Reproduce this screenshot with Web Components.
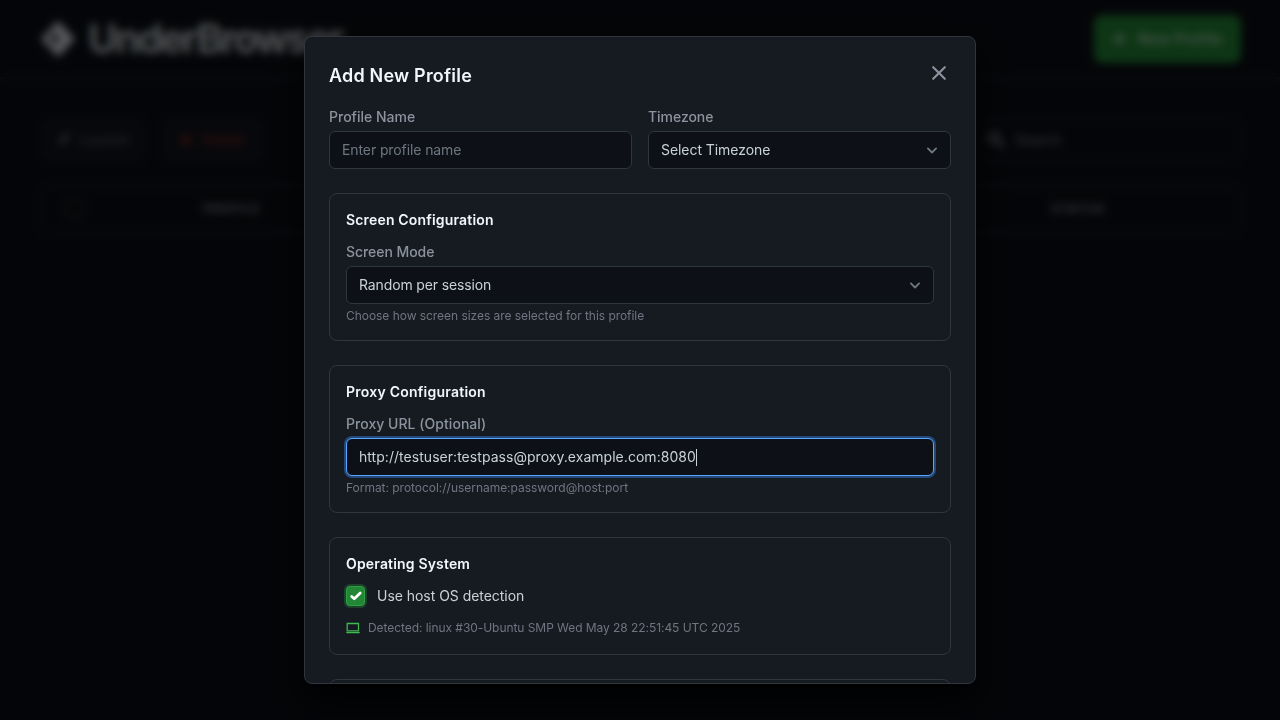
<!DOCTYPE html>
<html lang="en">
<head>
<meta charset="utf-8">
<title>UnderBrowser</title>
<style>
html, body { margin: 0; height: 100%; background: #0a0e14; overflow: hidden; }
body { font-family: Inter, "Liberation Sans", sans-serif; font-size: 14px; line-height: 20px; color: #c9d1d9; }
</style>
</head>
<body>
<app-shell></app-shell>
<profile-dialog heading="Add New Profile">
  <field-row>
    <form-field label="Profile Name"><text-box placeholder="Enter profile name" style="letter-spacing:-.1px"></text-box></form-field>
    <form-field label="Timezone" style="--label-track:-.05px"><select-box style="letter-spacing:-.06px">Select Timezone</select-box></form-field>
  </field-row>
  <config-section heading="Screen Configuration">
    <form-field label="Screen Mode" style="--label-track:-.06px;--hint-track:-.045px" hint="Choose how screen sizes are selected for this profile"><select-box style="letter-spacing:-.13px">Random per session</select-box></form-field>
  </config-section>
  <config-section heading="Proxy Configuration" style="--head-track:.24px">
    <form-field label="Proxy URL (Optional)" style="--label-track:.04px;--hint-track:-.03px" hint="Format: protocol://username:password@host:port"><text-box focused style="letter-spacing:.04px">http://testuser:testpass@proxy.example.com:8080</text-box></form-field>
  </config-section>
  <config-section heading="Operating System">
    <check-option>Use host OS detection</check-option>
    <os-info>Detected: linux #30-Ubuntu SMP Wed May 28 22:51:45 UTC 2025</os-info>
  </config-section>
  <config-section heading=""></config-section>
</profile-dialog>
<script>
const define = (name, render) => customElements.define(name, class extends HTMLElement {
  constructor() { super(); this.attachShadow({ mode: 'open' }); }
  connectedCallback() {
    const a = n => this.getAttribute(n) || '';
    this.shadowRoot.innerHTML = render(a);
  }
});

define('app-shell', () => `
<style>
:host { display: block; height: 720px; box-sizing: border-box; }
header { height: 79px; box-sizing: border-box; padding: 0 39px 0 40px; border-bottom: 1px solid #30363d; display: flex; align-items: center; justify-content: space-between; }
.brand { display: flex; align-items: center; gap: 12px; font-size: 40px; line-height: 48px; font-weight: 600; color: #f0f6fc; letter-spacing: -2.1px; opacity: .9; }
.brand svg { display: block; }
.new { display: flex; align-items: center; gap: 11px; height: 48px; width: 147px; box-sizing: border-box; padding: 0 18px; border-radius: 8px; background: #238636; color: rgba(255,255,255,.7); font-weight: 600; font-size: 14px; letter-spacing: .65px; white-space: nowrap; }
main { padding: 38px 39px 0 40px; }
.bar { display: flex; gap: 16px; height: 46px; align-items: center; }
.btn { display: flex; align-items: center; gap: 8px; height: 46px; box-sizing: border-box; padding: 0 16px; border-radius: 8px; background: #161b22; color: #8b949e; width: 106px; font-weight: 500; opacity: .6; }
.btn.del { color: #da3633; width: 102px; }
.search { margin-left: auto; width: 266px; height: 42px; box-sizing: border-box; border: 1px solid #30363d; border-radius: 8px; display: flex; align-items: center; gap: 10px; padding: 0 11px; color: #7d8590; }
.table { margin-top: 22px; height: 48px; box-sizing: border-box; border: 1px solid #30363d; border-radius: 8px; display: grid; grid-template-columns: 162px 848px 1fr; align-items: center; font-size: 12px; font-weight: 600; letter-spacing: 1.2px; color: #8b949e; }
.box { width: 18px; height: 18px; box-sizing: border-box; border: 1px solid #484f58; border-radius: 4px; margin-left: 24px; }
</style>
<header>
  <div class="brand"><svg width="36" height="38" viewBox="0 0 36 38"><path fill="#f0f6fc" fill-rule="evenodd" d="M18 1 35 19 18 37 1 19ZM12 12v13l8-6.5Z"/></svg><span>UnderBrowser</span></div>
  <div class="new"><svg width="16" height="16" viewBox="0 0 16 16"><path d="M8 2v12M2 8h12" stroke="currentColor" stroke-width="3"/></svg>New Profile</div>
</header>
<main>
  <div class="bar">
    <div class="btn"><svg width="16" height="16" viewBox="0 0 16 16"><path fill="currentColor" d="M3 15 5 9H2L10 1h4l-3 5h3Z"/></svg>Launch</div>
    <div class="btn del"><svg width="16" height="16" viewBox="0 0 16 16"><path d="m3 3 10 10M13 3 3 13" stroke="currentColor" stroke-width="3"/></svg>Delete</div>
    <div class="search"><svg width="18" height="18" viewBox="0 0 18 18" fill="none" stroke="currentColor" stroke-width="3"><circle cx="7" cy="7" r="5"/><path d="m11 11 6 6"/></svg>Search</div>
  </div>
  <div class="table"><span class="box"></span><span>PROFILE</span><span>STATUS</span></div>
</main>`);

define('profile-dialog', a => `
<style>
:host { position: fixed; inset: 0; display: flex; align-items: center; justify-content: center; background: rgba(0,0,0,.6); -webkit-backdrop-filter: blur(4px); backdrop-filter: blur(4px); }
.panel { width: 672px; height: 648px; box-sizing: border-box; border: 1px solid #30363d; border-radius: 8px; background: #161b22; padding: 24px; overflow: hidden; box-shadow: 0 16px 32px rgba(0,0,0,.85); }
header { display: flex; justify-content: space-between; align-items: flex-start; height: 46px; }
h2 { margin: 0; padding-top: 1px; font-size: 18px; line-height: 28px; font-weight: 600; letter-spacing: .2px; color: #f0f6fc; }
svg { display: block; width: 24px; height: 24px; }
.body { display: flex; flex-direction: column; gap: 24px; }
</style>
<div class="panel">
  <header><h2>${a('heading')}</h2><svg viewBox="0 0 24 24" fill="none" stroke="#8b949e" stroke-width="2.1" stroke-linecap="round"><path d="M6.2 6.2l11.6 11.6M17.8 6.2 6.2 17.8"/></svg></header>
  <div class="body"><slot></slot></div>
</div>`);

define('field-row', () => `
<style>:host { display: grid; grid-template-columns: 1fr 1fr; gap: 16px; }</style><slot></slot>`);

define('config-section', a => `
<style>
:host { display: block; flex: none; box-sizing: border-box; border: 1px solid #30363d; border-radius: 8px; padding: 16px; }
h3 { margin: 0 0 12px; height: 20px; font-size: 14px; line-height: 20px; font-weight: 600; letter-spacing: var(--head-track, .17px); color: #f0f6fc; }
</style><h3>${a('heading')}</h3><slot></slot>`);

define('form-field', a => `
<style>
:host { display: block; }
.label { margin-bottom: 4px; font-weight: 500; letter-spacing: var(--label-track, 0); color: #8b949e; }
.hint { margin-top: 4px; font-size: 12px; line-height: 16px; letter-spacing: var(--hint-track, 0); color: #6e7681; }
</style><div class="label">${a('label')}</div><slot></slot>${a('hint') ? `<div class="hint">${a('hint')}</div>` : ''}`);

define('text-box', a => `
<style>
:host { display: flex; align-items: center; height: 38px; box-sizing: border-box; padding: 0 12px; border: 1px solid #30363d; border-radius: 6px; background: #0d1117; color: #c9d1d9; }
:host([focused]) { border-color: #58a6ff; box-shadow: 0 0 0 2px rgba(56,139,253,.4); }
.ph { color: #6e7681; }
.caret { display: none; width: 1px; height: 17px; background: #c9d1d9; }
:host([focused]) .caret { display: block; }
</style>${a('placeholder') ? `<span class="ph">${a('placeholder')}</span>` : ''}<slot></slot><span class="caret"></span>`);

define('select-box', () => `
<style>
:host { display: flex; align-items: center; justify-content: space-between; height: 38px; box-sizing: border-box; padding: 0 10.5px 0 12px; border: 1px solid #30363d; border-radius: 6px; background: #0d1117; color: #c9d1d9; }
svg { width: 16px; height: 16px; }
</style><span><slot></slot></span><svg viewBox="0 0 16 16"><path fill="none" stroke="#6e7681" stroke-width="1.8" stroke-linecap="round" stroke-linejoin="round" d="M3.9 6.4 8 10.5l4.1-4.1"/></svg>`);

define('check-option', () => `
<style>
:host { display: flex; align-items: center; gap: 12px; height: 20px; letter-spacing: -.04px; }
.tick { width: 19px; height: 20px; box-sizing: border-box; border: 1px solid #2ea043; border-radius: 4px; background: #238636; box-shadow: 0 0 0 2px rgba(46,160,67,.3); display: flex; align-items: center; justify-content: center; }
svg { width: 14px; height: 14px; flex: none; }
</style><span class="tick"><svg viewBox="0 0 14 14"><path fill="none" stroke="#fff" stroke-width="2.7" stroke-linecap="round" stroke-linejoin="round" d="M2.7 7.4 5.3 9.8 11.2 4"/></svg></span><slot></slot>`);

define('os-info', () => `
<style>
:host { display: flex; align-items: center; gap: 8px; height: 20px; margin-top: 12px; font-size: 12px; line-height: 16px; letter-spacing: -.055px; color: #6e7681; }
svg { width: 14px; height: 14px; }
</style><svg viewBox="0 0 14 14" fill="none" stroke="#3fb950"><path d="M1.2 2.5h11.3v7.4H1.2z" stroke-width="1.3"/><path d="M.3 11.6h13.4" stroke-width="1.1"/></svg><slot></slot>`);
</script>
</body>
</html>
